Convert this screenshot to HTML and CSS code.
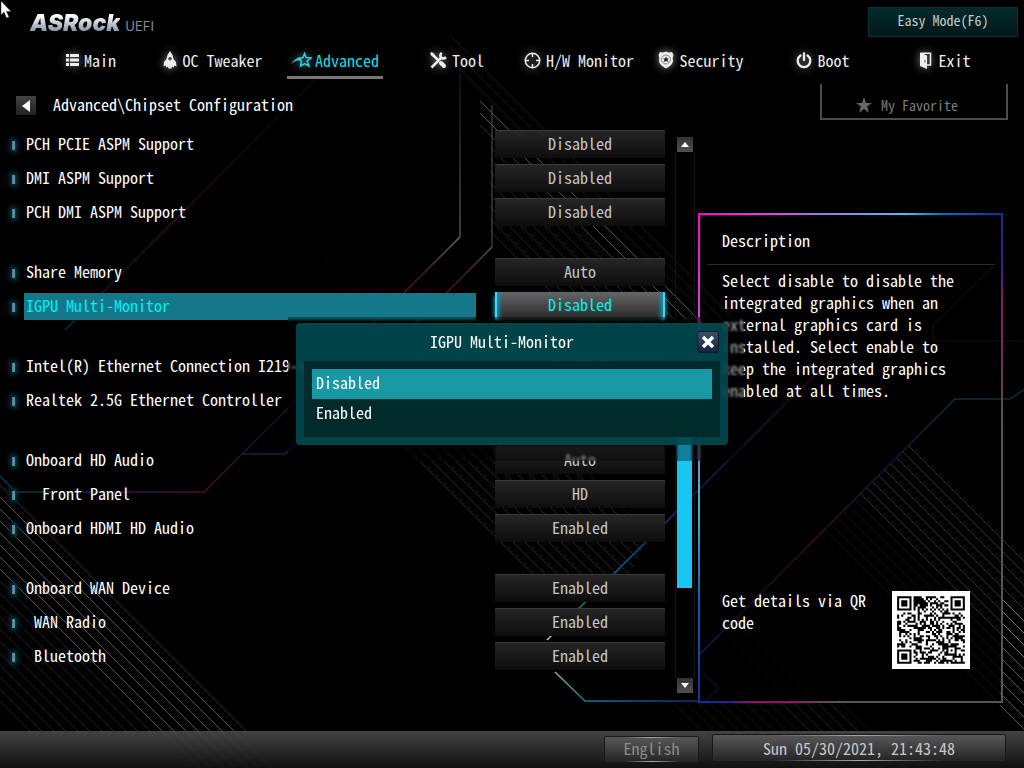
FILE: index.html
```
<!DOCTYPE html>
<html lang="en">
<head>
<meta charset="utf-8">
<meta name="viewport" content="width=device-width, initial-scale=1">
<title>ASRock UEFI</title>
<link rel="stylesheet" href="styles.css">
</head>
<body>
<svg class="backdrop" viewBox="0 0 1024 768" preserveAspectRatio="xMidYMid slice" aria-hidden="true">
  <defs>
    <pattern id="hatch" width="12" height="12" patternUnits="userSpaceOnUse" patternTransform="translate(0 5)"><path d="M-1 -1L13 13" stroke="#fff" stroke-width="1"/></pattern>
    <linearGradient id="g1" gradientUnits="userSpaceOnUse" x1="0" y1="237" x2="0" y2="492"><stop offset="0" stop-color="#666"/><stop offset=".15" stop-color="#4a1426"/><stop offset=".35" stop-color="#222a3a"/><stop offset=".75" stop-color="#141230"/><stop offset="1" stop-color="#4c0c34"/></linearGradient>
    <linearGradient id="g2" gradientUnits="userSpaceOnUse" x1="16" y1="0" x2="204" y2="0"><stop offset="0" stop-color="#063a4c"/><stop offset=".5" stop-color="#1b1c4c"/><stop offset="1" stop-color="#4c0c34"/></linearGradient>
    <linearGradient id="g3" gradientUnits="userSpaceOnUse" x1="395" y1="0" x2="65" y2="330"><stop offset="0" stop-color="#000"/><stop offset=".45" stop-color="#0d0d18"/><stop offset=".65" stop-color="#36081b"/><stop offset=".85" stop-color="#14142a"/><stop offset="1" stop-color="#0a2d3c"/></linearGradient>
    <linearGradient id="g4" gradientUnits="userSpaceOnUse" x1="860" y1="330" x2="547" y2="640"><stop offset="0" stop-color="#000"/><stop offset=".15" stop-color="#2a0620"/><stop offset=".5" stop-color="#1a1a50"/><stop offset=".7" stop-color="#0b4c8a"/><stop offset=".92" stop-color="#187a94"/><stop offset="1" stop-color="#ccc"/></linearGradient>
    <linearGradient id="g5" gradientUnits="userSpaceOnUse" x1="955" y1="399" x2="700" y2="654"><stop offset="0" stop-color="#08303e"/><stop offset=".25" stop-color="#101440"/><stop offset=".55" stop-color="#3c0920"/><stop offset=".85" stop-color="#160f30"/><stop offset="1" stop-color="#10205a"/></linearGradient>
    <linearGradient id="g6" gradientUnits="userSpaceOnUse" x1="555" y1="0" x2="700" y2="0"><stop offset="0" stop-color="#9aa"/><stop offset=".2" stop-color="#177a92"/><stop offset="1" stop-color="#123260"/></linearGradient>
    <linearGradient id="v" gradientUnits="userSpaceOnUse" x1="0" y1="30" x2="0" y2="240"><stop offset="0" stop-color="#000"/><stop offset="1" stop-color="#555"/></linearGradient>
  </defs>
  <g fill="url(#hatch)">
    <path d="M0 485L283 768H190L0 578Z" opacity=".34"/>
    <path d="M0 578L190 768H60L0 708Z" opacity=".13"/>
    <path d="M450 25L760 335H720L450 65Z" opacity=".1"/>
    <path d="M480 95L720 335H690L480 125Z" opacity=".34"/>
    <path d="M490 135L690 335H590L490 235Z" opacity=".15"/>
    <path d="M330 190L460 320H360L320 250Z" opacity=".03"/>
    <path d="M913 440L1024 551V660L858 494Z" opacity=".2"/>
    <path d="M1002 590L1024 612V737L1000 713Z" opacity=".35"/>
    <path d="M858 494L1002 638V715L820 533Z" opacity=".07"/>
    <path d="M400 445H560L650 535L630 575H530Z" opacity=".16"/>
    <path d="M670 700H850L918 768H738Z" opacity=".08"/>
    <path d="M745 608L870 733H800L720 640Z" opacity=".04"/>
  </g>
  <g fill="none" stroke-width="1.5">
    <path d="M460 30V237" stroke="url(#v)"/><path d="M492 105V247" stroke="#555" stroke-width="1"/>
    <path d="M460 237L204 492M492 247L297 443" stroke="url(#g1)"/>
    <path d="M0 476L16 492H204" stroke="url(#g2)"/>
    <path d="M242 454H285L297 443" stroke="#0e2444"/>
    <path d="M395 0L65 330" stroke="url(#g3)"/>
    <path d="M860 330L547 640" stroke="url(#g4)"/>
    <path d="M555 672L585 701L700 701" stroke="url(#g6)"/>
    <path d="M955 399L700 654" stroke="url(#g5)"/>
    <path d="M955 399H1010L1024 390" stroke="#0c2c3a"/>
    <path d="M1024 341H933V325L1000 260" stroke="#07181a" stroke-width="1"/>
    <path d="M700 670L719 688L700 706" stroke="#0c0c2c"/>
  </g>
</svg>

<div class="screen">
  <header class="topbar">
    <div class="brand"><span class="brand-name">ASRock</span><span class="brand-sub">UEFI</span></div>
    <button class="easy" type="button">Easy Mode(F6)</button>
  </header>

  <nav class="tabs">
    <a href="#main"><svg width="13" height="14" viewBox="0 0 13 14"><path fill="currentColor" d="M0 1h3v3H0zM4 1h9v3H4zM0 5.500h3v3H0zM4 5.500h9v3H4zM0 10h3v3H0zM4 10h9v3H4z"/></svg>Main</a>
    <a href="#oc"><svg width="14" height="18" viewBox="0 0 14 18"><path fill="currentColor" fill-rule="evenodd" d="M7 0L9.500 4L10.500 8L13 11L13.500 15.500L11.500 14.500L10.500 16.500L9 15.500L8.500 17.500H5.500L5 15.500L3.500 16.500L2.500 14.500L.5 15.500L1 11L3.500 8L4.500 4ZM7 6A1.700 1.700 0 1 0 7 9.400A1.700 1.700 0 1 0 7 6Z"/></svg>OC Tweaker</a>
    <a href="#advanced" class="active" aria-current="page"><svg width="21" height="16" viewBox="0 0 21 16"><path fill="none" stroke="currentColor" stroke-width="1.500" d="M13.500 1.500L15 5.500L20 6L16 9L18 14L13.500 11.500L9.500 14L10.500 9.500L7 6.500L12 5.500Z"/><path fill="currentColor" d="M0 12Q4 5.500 10 6L10 8Q4 8 0 12Z"/></svg>Advanced</a>
    <a href="#tool"><svg width="17" height="17" viewBox="0 0 17 17"><path fill="none" stroke="currentColor" stroke-width="2.500" d="M1.500 15.500L12 5M2 2L8 8"/><path fill="none" stroke="currentColor" stroke-width="4" stroke-linecap="round" d="M11 11L14 14"/><path fill="none" stroke="currentColor" stroke-width="2.500" d="M11.500 .8Q9.500 3.500 11 5.500Q13.500 7.500 16 5.300"/><path fill="currentColor" d="M0 1.500L1.500 0L4.500 2L4 4.500L2 4.500Z"/></svg>Tool</a>
    <a href="#monitor"><svg width="17" height="17" viewBox="0 0 17 17"><circle cx="8.500" cy="8.500" r="7.200" fill="none" stroke="currentColor" stroke-width="1.500"/><path stroke="currentColor" stroke-width="1.500" d="M8.500 1v4M8.500 12v4M1 8.500h4M12 8.500h4"/></svg>H/W Monitor</a>
    <a href="#security"><svg width="16" height="18" viewBox="0 0 16 18"><path fill="currentColor" d="M2 1Q5 2 8 .5Q11 2 14 1L15.500 4Q14 7 15 10Q14.500 14 8 17.500Q1.500 14 1 10Q2 7 .5 4Z"/><circle cx="8" cy="8.500" r="4.500" fill="none" stroke="#888"/><path fill="#222" d="M8 5.500L9 7.500L11 7.500L9.500 8.800L10.500 11L8 10L5.500 11L6.500 8.800L5 7.500L7 7.500Z"/></svg>Security</a>
    <a href="#boot"><svg width="16" height="17" viewBox="0 0 16 17"><path fill="none" stroke="currentColor" stroke-width="2.300" stroke-linecap="round" d="M4.500 3.500A6.300 6.300 0 1 0 11.500 3.500M8 1.500V8"/></svg>Boot</a>
    <a href="#exit"><svg width="14" height="17" viewBox="0 0 14 17"><path fill="none" stroke="currentColor" stroke-width="1.500" d="M2 1.300H11.500V13H8"/><path fill="currentColor" fill-rule="evenodd" d="M1 .6L8 3.500V17L1 14ZM5.500 8V10.500H6.500V8Z"/></svg>Exit</a>
  </nav>

  <div class="crumbs">
    <button class="back" type="button" aria-label="Back"><svg width="8" height="12" viewBox="0 0 8 12"><path fill="#fff" d="M8 0V12L0 6Z"/></svg></button>
    <h1>Advanced\Chipset Configuration</h1>
    <button class="favorite" type="button"><svg width="16" height="16" viewBox="0 0 16 16"><path fill="#666" d="M8 0L10 6H16L11.200 9.600L13 16L8 12L3 16L4.800 9.600L0 6H6Z"/></svg>My Favorite</button>
  </div>

  <main class="content">
    <div class="settings">
      <div class="group">
        <div class="row"><i class="bullet"></i><label for="s1">PCH PCIE ASPM Support</label><button id="s1" type="button">Disabled</button></div>
        <div class="row"><i class="bullet"></i><label for="s2">DMI ASPM Support</label><button id="s2" type="button">Disabled</button></div>
        <div class="row"><i class="bullet"></i><label for="s3">PCH DMI ASPM Support</label><button id="s3" type="button">Disabled</button></div>
      </div>
      <div class="group">
        <div class="row"><i class="bullet"></i><label for="s4">Share Memory</label><button id="s4" type="button">Auto</button></div>
        <div class="row selected"><i class="bullet"></i><label for="s5">IGPU Multi-Monitor</label><button id="s5" type="button">Disabled</button></div>
      </div>
      <div class="group">
        <div class="row"><i class="bullet"></i><label for="s6">Intel(R) Ethernet Connection I219-V</label><button id="s6" type="button">Enabled</button></div>
        <div class="row"><i class="bullet"></i><label for="s7">Realtek 2.5G Ethernet Controller</label><button id="s7" type="button">Enabled</button></div>
      </div>
      <div class="group">
        <div class="row"><i class="bullet"></i><label for="s8">Onboard HD Audio</label><button id="s8" type="button">Auto</button></div>
        <div class="row sub2"><i class="bullet"></i><label for="s9">Front Panel</label><button id="s9" type="button">HD</button></div>
        <div class="row"><i class="bullet"></i><label for="s10">Onboard HDMI HD Audio</label><button id="s10" type="button">Enabled</button></div>
      </div>
      <div class="group">
        <div class="row"><i class="bullet"></i><label for="s11">Onboard WAN Device</label><button id="s11" type="button">Enabled</button></div>
        <div class="row sub1"><i class="bullet"></i><label for="s12">WAN Radio</label><button id="s12" type="button">Enabled</button></div>
        <div class="row sub1"><i class="bullet"></i><label for="s13">Bluetooth</label><button id="s13" type="button">Enabled</button></div>
      </div>
    </div>

    <div class="scroll">
      <button type="button" aria-label="Scroll up"><svg width="8" height="5" viewBox="0 0 8 5"><path fill="#fff" d="M4 0L8 5H0Z"/></svg></button>
      <div class="track"><div class="thumb"></div></div>
      <button type="button" aria-label="Scroll down"><svg width="8" height="5" viewBox="0 0 8 5"><path fill="#fff" d="M4 5L8 0H0Z"/></svg></button>
    </div>

    <aside class="description">
      <h2>Description</h2>
      <p>Select disable to disable the integrated graphics when an external graphics card is installed. Select enable to keep the integrated graphics enabled at all times.</p>
      <div class="qr-row">
        <p>Get details via QR code</p>
        <svg id="qr" class="qr" viewBox="0 0 38 38" role="img" aria-label="QR code"><path fill="#000"/></svg>
      </div>
    </aside>
  </main>

  <footer class="footer">
    <button class="lang" type="button">English</button>
    <time class="clock" datetime="2021-05-30T21:43:48">Sun 05/30/2021, 21:43:48</time>
  </footer>
</div>

<section class="dialog" role="dialog" aria-labelledby="dialog-title">
  <header>
    <h2 id="dialog-title">IGPU Multi-Monitor</h2>
    <button class="close" type="button" aria-label="Close"><svg width="12" height="12" viewBox="0 0 12 12"><path stroke="#fff" stroke-width="3.500" d="M1 1L11 11M11 1L1 11"/></svg></button>
  </header>
  <div class="options">
    <button class="chosen" type="button">Disabled</button>
    <button type="button">Enabled</button>
  </div>
</section>

<svg class="pointer" width="12" height="20" viewBox="0 0 12 20" aria-hidden="true"><path fill="#fff" stroke="#333" stroke-width=".5" d="M1 1V15L4 12L6.500 18L9 17L6.500 11.500H11Z"/></svg>
<script src="qr.js"></script>
</body>
</html>
```

FILE: styles.css
```
* {
  box-sizing: border-box;
}

body {
  margin: 0;
  background: #000;
  color: #fff;
  font: 16px/22px "Noto Sans Mono CJK SC", "Noto Sans Mono CJK JP", "Liberation Mono", monospace;
  position: relative;
  overflow-x: hidden;
}

h1, h2, p {
  margin: 0;
  font-size: 16px;
  font-weight: 400;
}

button {
  border: 0;
  padding: 0;
  background: none;
  color: inherit;
  font: inherit;
}

svg {
  display: block;
  flex: none;
}

.backdrop {
  position: absolute;
  inset: 0;
  width: 100%;
  height: 100%;
}

.screen {
  position: relative;
  display: flex;
  flex-direction: column;
  min-height: 100vh;
}

.topbar {
  display: flex;
  justify-content: space-between;
  align-items: center;
  height: 46px;
  padding: 0 6px 2px 30px;
}

.brand {
  display: flex;
  align-items: baseline;
  gap: 5px;
  padding-top: 4px;
}

.brand-name {
  font: italic 900 23px/24px Inter, sans-serif;
  color: transparent;
  background: linear-gradient(#fff 20%, #8e9bac 80%);
  background-clip: text;
  -webkit-background-clip: text;
}

.brand-sub {
  font: 13px/24px Inter, sans-serif;
  color: #8c8c8c;
}

.easy {
  width: 150px;
  height: 30px;
  padding-bottom: 4px;
  border: 1px solid #053538;
  background: linear-gradient(#022a2c, #021819);
  color: #c4cccc;
  font-size: 14px;
}

.tabs {
  display: grid;
  grid-template-columns: repeat(8, 1fr);
  justify-items: center;
  padding: 0 18px 0 30px;
}

.tabs a {
  display: flex;
  align-items: center;
  justify-content: center;
  gap: 5px;
  height: 33px;
  padding-bottom: 2px;
  border-bottom: 3px solid transparent;
  color: #eee;
  text-decoration: none;
  white-space: nowrap;
}

.tabs svg {
  filter: drop-shadow(0 0 4px #888);
}

.tabs .active {
  gap: 3px;
  padding: 0 4px 2px;
  color: #12dcea;
  border-bottom-color: #777;
}

.crumbs {
  display: flex;
  align-items: center;
  height: 48px;
  padding: 5px 16px 0;
}

.crumbs h1 {
  padding-bottom: 4px;
}

.back {
  display: grid;
  place-items: center;
  width: 20px;
  height: 19px;
  margin-right: 17px;
  background: linear-gradient(#444, #222);
}

.favorite {
  display: flex;
  align-items: center;
  justify-content: center;
  gap: 9px;
  align-self: flex-start;
  width: 188px;
  height: 36px;
  margin-left: auto;
  padding: 8px 14px 0 0;
  border: solid #4c4c4c;
  border-width: 0 2px 2px;
  color: #7c7c7c;
  font-size: 14px;
}

.content {
  flex: 1;
  display: grid;
  grid-template-columns: minmax(0, 1fr) 20px 308px;
  padding-right: 21px;
}

.settings {
  display: flex;
  flex-direction: column;
  gap: 26px;
  padding-right: 10px;
}

.row {
  display: grid;
  grid-template-columns: 8px 16px minmax(0, 1fr) 170px;
  align-items: center;
  height: 34px;
}

.bullet {
  grid-column: 2;
  justify-self: start;
  width: 3px;
  height: 9px;
  margin: 2px 0 0 4px;
  border-left: 1px solid #777;
  background: #2aa0c4;
  box-shadow: 0 0 4px 3px #032c34;
}

.row label {
  padding: 0 0 2px 2px;
  margin-right: 19px;
  line-height: 25px;
  white-space: nowrap;
}

.row.sub1 label {
  padding-left: 10px;
}

.row.sub2 label {
  padding-left: 18px;
}

.row button {
  height: 28px;
  padding-bottom: 4px;
  border-top: 1px solid #3a3a3a;
  background: linear-gradient(#252525, #0d0d0d);
  color: #c4c4c4;
}

.row.selected label {
  background: #15788a;
  color: #00f0f4;
}

.row.selected button {
  border: solid #46d4f8;
  border-width: 0 2px;
  background: linear-gradient(#666, #262626);
  box-shadow: 4px 0 4px -3px #0b9cb8, -4px 0 4px -3px #0b9cb8, inset 6px 0 5px -4px #0b9cb8, inset -6px 0 5px -4px #0b9cb8;
  color: #00f0f4;
}

.scroll {
  display: flex;
  flex-direction: column;
  align-items: center;
  padding: 10px 0 38px;
}

.scroll button {
  display: grid;
  place-items: center;
  width: 16px;
  height: 15px;
  background: linear-gradient(#333, #505050);
}

.track {
  flex: 1;
  width: 20px;
  padding-left: 1px;
  border: solid #141414;
  border-width: 0 1px;
}

.thumb {
  width: 15px;
  height: 39%;
  margin-top: 231px;
  background: #19c5f2;
}

.description {
  display: flex;
  flex-direction: column;
  margin: 86px 0 28px 3px;
  padding: 2px 9px;
  background:
    linear-gradient(90deg, #ff00d8, #ff20dc 12%, #9a80dc 42%, #50c0dc 68%, #0870bc 80%, #10308c) top / 100% 2px no-repeat,
    linear-gradient(90deg, #182c98, #30208c 10%, #94106c 18%, #881860 32%, #555 43%) bottom / 100% 2px no-repeat,
    linear-gradient(#ff00d8, #d840d8 22%, #7090d0 50%, #38b8c8 60%, #1060b8 78%, #182c98) left / 2px 100% no-repeat,
    linear-gradient(#10308c, #30208c 10%, #802060 18%, #702858 28%, #555 42%) right / 2px 100% no-repeat;
}

.description h2 {
  padding: 14px 15px 13px;
  border-bottom: 1px solid #2a2a2a;
}

.description > p {
  width: 250px;
  padding: 4px 0 0 15px;
}

.qr-row {
  display: flex;
  justify-content: space-between;
  align-items: flex-end;
  margin: auto 24px 32px 15px;
}

.qr {
  width: 78px;
  height: 78px;
  background: #fff;
}

.qr-row p {
  width: 150px;
  padding-bottom: 36px;
}

.footer {
  display: flex;
  justify-content: flex-end;
  gap: 13px;
  height: 37px;
  padding: 3px 18px 0;
  background: linear-gradient(rgba(74, 74, 74, .9), rgba(18, 18, 18, .9));
}

.lang, .clock {
  height: 28px;
  border: 1px solid #181818;
  border-radius: 2px;
  background:
    linear-gradient(90deg, transparent, #aaa, transparent) top / 60% 1px no-repeat,
    linear-gradient(90deg, transparent, #aaa, transparent) bottom / 60% 1px no-repeat,
    linear-gradient(#585858, #242424);
  text-align: center;
  line-height: 26px;
}

.lang {
  width: 95px;
  height: 27px;
  margin-top: 2px;
  padding-bottom: 3px;
  line-height: 22px;
  color: #8c8c8c;
}

.clock {
  width: 294px;
  color: #c8c8c8;
}

.dialog {
  position: absolute;
  top: 50%;
  left: 50%;
  width: 432px;
  transform: translate(-50%, -50%);
  padding: 0 8px 8px;
}

.dialog::before, .dialog::after {
  content: "";
  position: absolute;
  z-index: -1;
}

.dialog::before {
  inset: -6px -16px -16px -8px;
  background: rgba(0, 0, 0, .35);
  backdrop-filter: blur(1px);
}

.dialog::after {
  inset: 0;
  border-radius: 4px;
  background: rgba(0, 74, 80, .92);
}

.dialog header {
  display: flex;
  align-items: center;
  height: 38px;
}

.dialog h2 {
  flex: 1;
  padding: 0 0 2px 3px;
  text-align: center;
}

.close {
  display: grid;
  place-items: center;
  width: 22px;
  height: 22px;
  margin-right: 1px;
  border: 1px solid #0c1c2c;
  border-radius: 3px;
  background: linear-gradient(#3c5070, #142438);
}

.options {
  display: flex;
  flex-direction: column;
  padding: 8px;
  background: #022a2a;
}

.options button {
  height: 30px;
  padding: 0 4px 4px;
  text-align: left;
}

.options .chosen {
  background: #1a97a4;
}

.pointer {
  position: absolute;
  top: 0;
  left: 0;
}
```

FILE: qr.js
```
// Draws a 33-module code: finders, timing tracks, alignment mark and data cells.
const SIZE = 33;
const MARGIN = 2.5;

function ring(x, y, cx, cy, outer) {
  const d = Math.max(Math.abs(x - cx), Math.abs(y - cy));
  if (d > outer) return null;
  return outer === 2 ? d !== 1 : d !== 2 && d !== 4;
}

function cell(x, y, noise) {
  for (const [cx, cy] of [[3, 3], [29, 3], [3, 29]]) {
    const r = ring(x, y, cx, cy, 4);
    if (r !== null) return r;
  }
  const a = ring(x, y, 26, 26, 2);
  if (a !== null) return a;
  if (x === 6 || y === 6) return (x + y) % 2 === 0;
  return noise;
}

let seed = 590;
let d = "";
for (let y = 0; y < SIZE; y++) {
  for (let x = 0; x < SIZE; x++) {
    seed = (seed * 1103515 + 12345) % 2147483648;
    if (cell(x, y, (seed >> 12) % 100 < 50)) d += `M${x + MARGIN} ${y + MARGIN}h1v1h-1z`;
  }
}
document.querySelector("#qr path").setAttribute("d", d);
```
